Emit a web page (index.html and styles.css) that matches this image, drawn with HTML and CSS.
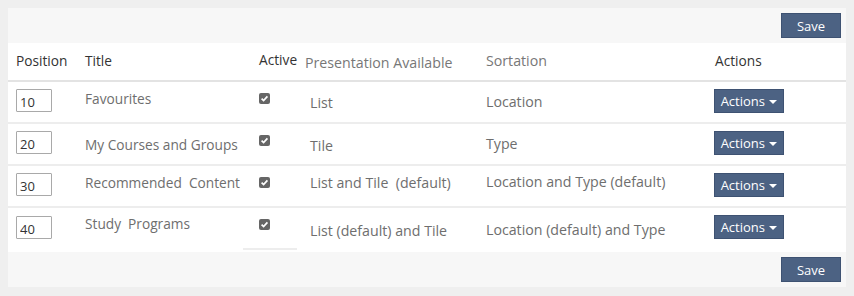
FILE: index.html
```html
<!DOCTYPE html>
<html lang="en">
<head>
<meta charset="utf-8">
<title>Overview settings</title>
<link rel="stylesheet" href="styles.css">
</head>
<body>
<div class="panel">
  <div class="bar"><button class="btn save">Save</button></div>
  <div class="table">
    <div class="row head">
      <div class="c pos">Position</div>
      <div class="c title">Title</div>
      <div class="c chk">Active</div>
      <div class="c pres">Presentation Available</div>
      <div class="c sort">Sortation</div>
      <div class="c act">Actions</div>
    </div>
    <div class="row r1">
      <div class="c pos"><input class="num" value="10"></div>
      <div class="c title">Favourites</div>
      <div class="c chk"><span class="box"><svg viewBox="0 0 11 11" width="11" height="11"><path d="M2.6 5.6 4.6 7.6 8.4 3.4" fill="none" stroke="#fff" stroke-width="1.7"/></svg></span></div>
      <div class="c pres">List</div>
      <div class="c sort">Location</div>
      <div class="c act"><button class="btn drop">Actions <span class="caret"></span></button></div>
    </div>
    <div class="row r2">
      <div class="c pos"><input class="num" value="20"></div>
      <div class="c title">My Courses and Groups</div>
      <div class="c chk"><span class="box"><svg viewBox="0 0 11 11" width="11" height="11"><path d="M2.6 5.6 4.6 7.6 8.4 3.4" fill="none" stroke="#fff" stroke-width="1.7"/></svg></span></div>
      <div class="c pres">Tile</div>
      <div class="c sort">Type</div>
      <div class="c act"><button class="btn drop">Actions <span class="caret"></span></button></div>
    </div>
    <div class="row r3">
      <div class="c pos"><input class="num" value="30"></div>
      <div class="c title">Recommended&nbsp; Content</div>
      <div class="c chk"><span class="box"><svg viewBox="0 0 11 11" width="11" height="11"><path d="M2.6 5.6 4.6 7.6 8.4 3.4" fill="none" stroke="#fff" stroke-width="1.7"/></svg></span></div>
      <div class="c pres">List and Tile&nbsp; (default)</div>
      <div class="c sort">Location and Type (default)</div>
      <div class="c act"><button class="btn drop">Actions <span class="caret"></span></button></div>
    </div>
    <div class="row r4">
      <div class="c pos"><input class="num" value="40"></div>
      <div class="c title">Study&nbsp; Programs</div>
      <div class="c chk"><span class="box"><svg viewBox="0 0 11 11" width="11" height="11"><path d="M2.6 5.6 4.6 7.6 8.4 3.4" fill="none" stroke="#fff" stroke-width="1.7"/></svg></span></div>
      <div class="c pres">List (default) and Tile</div>
      <div class="c sort">Location (default) and Type</div>
      <div class="c act"><button class="btn drop">Actions <span class="caret"></span></button></div>
    </div>
  </div>
  <div class="bar"><button class="btn save">Save</button></div>
</div>
</body>
</html>
```

FILE: styles.css
```css
html, body {
  margin: 0;
  padding: 0;
  background: #efefef;
}
body {
  padding: 8px;
  font-family: "Open Sans", "Liberation Sans", sans-serif;
  font-size: 13.7px;
  line-height: 18px;
  color: #6e6e6e;
}
.panel {
  background: #f7f7f7;
  width: 838px;
}
.bar {
  height: 35px;
  display: flex;
  justify-content: flex-end;
  align-items: flex-start;
  padding: 5px 5px 0 0;
  box-sizing: border-box;
}
.btn {
  font-family: "Open Sans", "Liberation Sans", sans-serif;
  font-size: 13px;
  color: #fff;
  background: #4c6283;
  border: 1px solid #3e5272;
  border-radius: 0;
  padding: 0;
  margin: 0;
  cursor: pointer;
}
.save {
  width: 60px;
  height: 25px;
  line-height: 22px;
}
.table {
  background: #fff;
  height: 209px;
}
.row {
  display: grid;
  grid-template-columns: 69px 174px 46px 181px 229px 139px;
  border-bottom: 2px solid #ededed;
  height: 40px;
}
.row.head {
  height: 37px;
  border-bottom-color: #e3e3e3;
}
.row.r4 {
  border-bottom: 0;
  height: 44px;
}
.c {
  padding-left: 8px;
  padding-top: 8px;
  white-space: nowrap;
}
.head .c {
  padding-top: 9px;
  color: #333;
}
.head .pres, .head .sort {
  color: #777;
}
.pres, .sort {
  font-size: 14.2px;
}
.head .pres {
  padding-top: 11px;
}
.head .chk {
  padding-top: 8px;
}
.pres {
  padding-left: 13px;
}
.head .pres {
  padding-left: 8px;
}
.pos, .act {
  padding-top: 7px;
}
.act {
  padding-left: 7px;
}
.head .act {
  padding-left: 8px;
}
.chk {
  padding-top: 11px;
}
.r1 .title { padding-top: 8px; }
.r1 .pres { padding-top: 12px; }
.r1 .sort { padding-top: 11px; }
.r2 .title { padding-top: 12px; }
.r2 .pres { padding-top: 13px; }
.r2 .sort { padding-top: 11px; }
.r3 .title { padding-top: 8px; }
.r3 .pres { padding-top: 8px; }
.r3 .sort { padding-top: 7px; }
.r4 .pos { padding-top: 8px; }
.r4 .title { padding-top: 7px; }
.r4 .pres { padding-top: 14px; }
.r4 .sort { padding-top: 13px; }
.r4 .chk {
  height: 42px;
  box-sizing: border-box;
  border-bottom: 2px solid #ededed;
  margin-left: -8px;
  padding-left: 16px;
  width: 54px;
}
.num {
  width: 36px;
  height: 23px;
  box-sizing: border-box;
  border: 1px solid #a9a9a9;
  border-radius: 1px;
  padding: 2px 0 0 3px;
  margin: 0;
  font-family: "Open Sans", "Liberation Sans", sans-serif;
  font-size: 13px;
  color: #333;
  background: #fff;
}
.box {
  display: block;
  width: 11px;
  height: 11px;
  background: #666;
  border-radius: 2px;
}
.box svg {
  display: block;
}
.drop {
  width: 70px;
  height: 24px;
  line-height: 21px;
  text-align: center;
}
.caret {
  display: inline-block;
  width: 0;
  height: 0;
  border-left: 4px solid transparent;
  border-right: 4px solid transparent;
  border-top: 4px solid #fff;
  vertical-align: middle;
  margin-left: 1px;
}
```
